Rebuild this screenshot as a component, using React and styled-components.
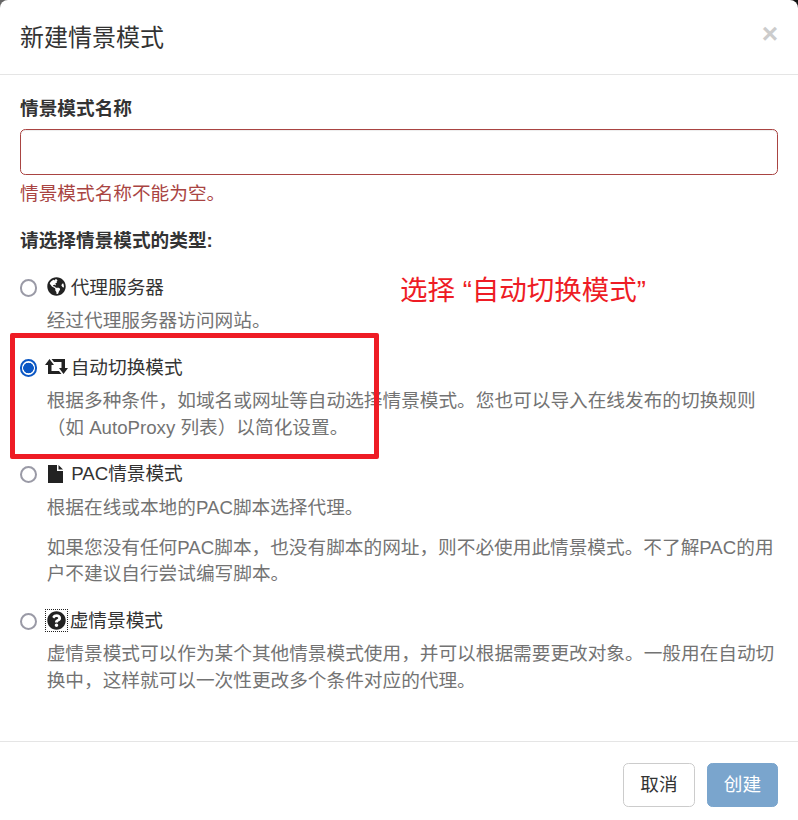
import styled, { createGlobalStyle } from 'styled-components';
import { FaGlobeAmericas, FaQuestionCircle } from 'react-icons/fa';

const GlobalStyle = createGlobalStyle`
  html, body {
    margin: 0;
    background: linear-gradient(90deg, #666 50%, #111 50%);
  }
  * {
    box-sizing: border-box;
  }
`;

const Modal = styled.div`
  position: relative;
  width: 798px;
  height: 820px;
  overflow: hidden;
  background: #fff;
  border-radius: 8px 8px 0 0;
  color: #333;
  font-family: 'Liberation Sans', 'Noto Sans CJK SC', sans-serif;
  font-size: 18.67px;
  line-height: 26.67px;
`;

const Header = styled.header`
  display: flex;
  justify-content: space-between;
  align-items: flex-start;
  height: 75px;
  padding: 20px;
  border-bottom: 1px solid #e5e5e5;
`;

const Title = styled.h4`
  margin: 0;
  font-size: 24px;
  font-weight: 400;
  line-height: 35px;
`;

const Close = styled.button`
  padding: 0;
  border: 0;
  background: none;
  color: #ccc;
  font: bold 28px/28px 'Liberation Sans', sans-serif;
`;

const Body = styled.div`
  padding: 21px 20px 0;
`;

const Label = styled.label`
  display: block;
  margin-bottom: 6.67px;
  font-weight: 700;
`;

const NameInput = styled.input`
  display: block;
  width: 100%;
  height: 45.33px;
  border: 1.33px solid #a94442;
  border-radius: 5.33px;
  outline: 0;
  box-shadow: inset 0 1px 1px rgba(0, 0, 0, 0.075);
`;

const ErrorText = styled.div`
  margin-top: 6.67px;
  margin-bottom: 20px;
  color: #a94442;
`;

const OptionList = styled.div`
  display: flex;
  flex-direction: column;
  gap: 20px;
  margin-top: 20px;
`;

const OptionLabel = styled.label`
  display: flex;
  align-items: center;
  height: 26.67px;
  color: #333;
`;

const Radio = styled.input.attrs({ type: 'radio', name: 'profile-type' })`
  appearance: none;
  flex: none;
  width: 17.33px;
  height: 17.33px;
  margin: 0 9.33px 0 0;
  border: 2px solid #9a9aa6;
  border-radius: 50%;
  background: #fff;

  &:checked {
    border-color: #0b57c4;
    background: radial-gradient(circle, #0b57c4 0 5px, #fff 5.6px);
  }
`;

const IconSlot = styled.span`
  display: inline-flex;
  flex: none;
  align-items: center;
  justify-content: center;
  width: ${(p) => p.$width}px;
  height: 21px;
  margin-top: -2px;
  margin-left: ${(p) => p.$shift || 0}px;
  margin-right: ${(p) => p.$gap || 0}px;
  color: #222;
  outline: ${(p) => (p.$focused ? '1px dotted #222' : 'none')};
`;

const Help = styled.p`
  margin: 6.67px 0 0 26.67px;
  color: #737373;

  & + & {
    margin-top: 13.33px;
  }
`;

const Footer = styled.footer`
  display: flex;
  justify-content: flex-end;
  gap: 12px;
  margin-top: 46px;
  padding: 21px 20px 20px;
  border-top: 1px solid #e5e5e5;
`;

const Button = styled.button`
  width: ${(p) => (p.$primary ? 71 : 72)}px;
  height: 44.5px;
  padding: 0;
  border: 1.33px solid ${(p) => (p.$primary ? '#7aa5cd' : '#ccc')};
  border-radius: 5.33px;
  background: ${(p) => (p.$primary ? '#7aa5cd' : '#fff')};
  color: ${(p) => (p.$primary ? '#fff' : '#333')};
  font: inherit;
`;

const Annotation = styled.div`
  position: absolute;
  top: 271px;
  left: 400px;
  color: #ee1c25;
  font-size: 27.5px;
  line-height: 40px;
`;

const Highlight = styled.div`
  position: absolute;
  top: 333px;
  left: 10px;
  width: 369px;
  height: 126px;
  border: 5px solid #ee1c25;
  border-radius: 2px;
  pointer-events: none;
`;

const RetweetIcon = () => (
  <svg width="23" height="15" viewBox="0 0 23 15" fill="currentColor">
    <path d="M4.5 0 9 6H6.5v6H14l2.5 3H3V6H0z" />
    <path d="M18.5 15 14 9h2.5V3H9L6.5 0H20v9h3z" />
  </svg>
);

const FileIcon = () => (
  <svg width="15" height="18" viewBox="0 0 15 18" fill="currentColor">
    <path d="M0 0h9v6h6v12H0z" />
    <path d="M10.5 0 15 4.5h-4.5z" />
  </svg>
);

const options = [
  {
    id: 'proxy',
    name: '代理服务器',
    icon: <FaGlobeAmericas size={19} />,
    width: 19,
    gap: 5,
    help: ['经过代理服务器访问网站。'],
  },
  {
    id: 'switch',
    name: '自动切换模式',
    icon: <RetweetIcon />,
    width: 23,
    shift: -2,
    gap: 3,
    checked: true,
    help: [
      '根据多种条件，如域名或网址等自动选择情景模式。您也可以导入在线发布的切换规则（如 AutoProxy 列表）以简化设置。',
    ],
  },
  {
    id: 'pac',
    name: 'PAC情景模式',
    icon: <FileIcon />,
    width: 17,
    shift: 0.5,
    gap: 7,
    help: [
      '根据在线或本地的PAC脚本选择代理。',
      '如果您没有任何PAC脚本，也没有脚本的网址，则不必使用此情景模式。不了解PAC的用户不建议自行尝试编写脚本。',
    ],
  },
  {
    id: 'virtual',
    name: '虚情景模式',
    icon: <FaQuestionCircle size={19} />,
    width: 21,
    shift: -1,
    gap: 3,
    focused: true,
    help: [
      '虚情景模式可以作为某个其他情景模式使用，并可以根据需要更改对象。一般用在自动切换中，这样就可以一次性更改多个条件对应的代理。',
    ],
  },
];

export default function App() {
  return (
    <Modal>
      <GlobalStyle />
      <Header>
        <Title>新建情景模式</Title>
        <Close>×</Close>
      </Header>
      <Body>
        <Label>情景模式名称</Label>
        <NameInput />
        <ErrorText>情景模式名称不能为空。</ErrorText>
        <Label>请选择情景模式的类型:</Label>
        <OptionList>
          {options.map((o) => (
            <div key={o.id}>
              <OptionLabel>
                <Radio defaultChecked={o.checked} />
                <IconSlot $width={o.width} $shift={o.shift} $gap={o.gap} $focused={o.focused}>
                  {o.icon}
                </IconSlot>
                {o.name}
              </OptionLabel>
              {o.help.map((text) => (
                <Help key={text}>{text}</Help>
              ))}
            </div>
          ))}
        </OptionList>
      </Body>
      <Footer>
        <Button>取消</Button>
        <Button $primary disabled>
          创建
        </Button>
      </Footer>
      <Annotation>选择 “自动切换模式”</Annotation>
      <Highlight />
    </Modal>
  );
}
